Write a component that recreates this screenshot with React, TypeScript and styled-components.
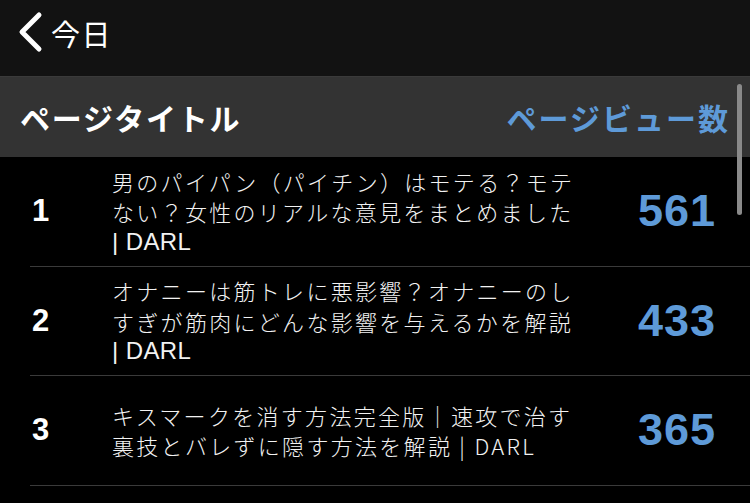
import styled, { createGlobalStyle } from 'styled-components'

const GlobalStyle = createGlobalStyle`
  html, body {
    margin: 0;
    padding: 0;
    background: #000000;
    font-family: "Noto Sans CJK JP", "Liberation Sans", sans-serif;
  }
`

const BLUE = '#5e9ad8'

interface Row {
  rank: number
  lines: string[]
  views: number
}

const rows: Row[] = [
  {
    rank: 1,
    lines: ['男のパイパン（パイチン）はモテる？モテ', 'ない？女性のリアルな意見をまとめました', '| DARL'],
    views: 561,
  },
  {
    rank: 2,
    lines: ['オナニーは筋トレに悪影響？オナニーのし', 'すぎが筋肉にどんな影響を与えるかを解説', '| DARL'],
    views: 433,
  },
  {
    rank: 3,
    lines: ['キスマークを消す方法完全版｜速攻で治す', '裏技とバレずに隠す方法を解説 | DARL'],
    views: 365,
  },
]

const Screen = styled.div`
  width: 750px;
  height: 503px;
  overflow: hidden;
  background: #000000;
  position: relative;
`

const NavBar = styled.div`
  height: 77px;
  background: #121212;
  display: flex;
  align-items: center;
  padding-left: 15px;
  gap: 6px;
  box-sizing: border-box;
  border-bottom: 1px solid #3a3a3a;
`

const BackLabel = styled.span`
  color: #ffffff;
  font-size: 29px;
  letter-spacing: 1.5px;
  margin-top: -10px;
`

const Chevron = styled.svg`
  width: 30px;
  height: 44px;
  margin-top: -12px;
`

const HeaderBand = styled.div`
  height: 80px;
  background: #333333;
  display: flex;
  align-items: center;
  justify-content: space-between;
  padding: 0 20px 0 20px;
  box-sizing: border-box;
`

const HeaderText = styled.span<{ $blue?: boolean }>`
  font-size: 30px;
  font-weight: 700;
  letter-spacing: ${p => (p.$blue ? '2px' : '1.8px')};
  color: ${p => (p.$blue ? BLUE : '#ffffff')};
`

const List = styled.div`
  display: flex;
  flex-direction: column;
`

const RowItem = styled.div`
  height: 109.6px;
  display: flex;
  align-items: center;
  margin-left: 30px;
  border-bottom: 1px solid #3a3a3a;
  box-sizing: border-box;
`

const Rank = styled.div`
  width: 80px;
  color: #ffffff;
  font-family: "Liberation Sans", sans-serif;
  font-size: 31px;
  font-weight: 700;
  padding-left: 2px;
`

const Title = styled.div`
  width: 480px;
  display: flex;
  flex-direction: column;
`

const TitleLine = styled.div<{ $latin?: boolean }>`
  color: #f2f2f2;
  font-family: ${p => (p.$latin ? '"Liberation Sans", sans-serif' : '"Noto Sans CJK JP", "Liberation Sans", sans-serif')};
  font-size: ${p => (p.$latin ? '24px' : '22px')};
  font-weight: 300;
  line-height: 30.5px;
  letter-spacing: ${p => (p.$latin ? '0.4px' : '2.3px')};
  white-space: nowrap;
`

const Views = styled.div`
  flex: 1;
  text-align: right;
  padding-right: 34px;
  color: ${BLUE};
  font-family: "Liberation Sans", sans-serif;
  font-size: 45px;
  font-weight: 700;
  letter-spacing: 1px;
`

const ScrollThumb = styled.div`
  position: absolute;
  left: 737px;
  top: 84px;
  width: 5px;
  height: 131px;
  border-radius: 3px;
  background: #8a8a8a;
`

export default function App() {
  return (
    <Screen>
      <GlobalStyle />
      <NavBar>
        <Chevron viewBox="0 0 30 44">
          <path d="M24 5 L7 22 L24 39" fill="none" stroke="#ffffff" strokeWidth="5" strokeLinecap="round" strokeLinejoin="round" />
        </Chevron>
        <BackLabel>今日</BackLabel>
      </NavBar>
      <HeaderBand>
        <HeaderText>ページタイトル</HeaderText>
        <HeaderText $blue>ページビュー数</HeaderText>
      </HeaderBand>
      <List>
        {rows.map(r => (
          <RowItem key={r.rank}>
            <Rank>{r.rank}</Rank>
            <Title>
              {r.lines.map(line => (
                <TitleLine key={line} $latin={line === '| DARL'}>
                  {line}
                </TitleLine>
              ))}
            </Title>
            <Views>{r.views}</Views>
          </RowItem>
        ))}
      </List>
      <ScrollThumb />
    </Screen>
  )
}
